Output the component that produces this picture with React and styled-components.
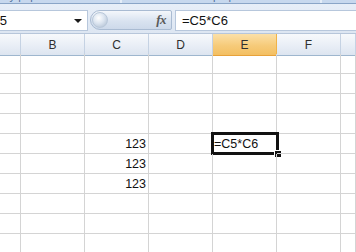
import React from "react";
import styled, { createGlobalStyle } from "styled-components";

const GlobalStyle = createGlobalStyle`
  body {
    margin: 0;
    background: #ffffff;
    font-family: "Liberation Sans", Arial, sans-serif;
    overflow: hidden;
  }
`;

const Window = styled.div`
  width: 356px;
  height: 252px;
  overflow: hidden;
  background: #ffffff;
  display: flex;
  flex-direction: column;
`;

const RibbonStrip = styled.div`
  height: 3px;
  display: flex;
  overflow: hidden;
  background: #c7d8ee;
  border-bottom: 1px solid #8aa5c7;
  flex-shrink: 0;
`;

const RibbonGroup = styled.div`
  width: ${(p) => p.$width}px;
  margin-left: ${(p) => p.$offset || 0}px;
  flex-shrink: 0;
  border-right: 2px solid #e4edf8;
  display: flex;
  justify-content: center;
  overflow: hidden;
`;

const GroupLabel = styled.span`
  font-size: 11px;
  line-height: 12px;
  margin-top: -10px;
  color: #4f6f99;
  white-space: nowrap;
`;

const FormulaBar = styled.div`
  height: 29px;
  display: flex;
  align-items: flex-start;
  padding-top: 6px;
  box-sizing: border-box;
  background: linear-gradient(#e7eef8, #dde6f2);
  flex-shrink: 0;
`;

const NameBox = styled.div`
  margin-left: -40px;
  width: 128px;
  height: 21px;
  box-sizing: border-box;
  background: #ffffff;
  border: 1px solid #b7c7dc;
  border-left: none;
  display: flex;
  align-items: center;
  justify-content: space-between;
  padding: 0 5px 0 31px;
  font-size: 13px;
  color: #111;
`;

const DropArrow = styled.span`
  width: 0;
  height: 0;
  border-left: 4px solid transparent;
  border-right: 4px solid transparent;
  border-top: 4px solid #1a1a1a;
  margin-top: 1px;
`;

const Pill = styled.div`
  margin-left: 2px;
  width: 82px;
  height: 20px;
  box-sizing: border-box;
  border: 1px solid #a9bbd2;
  border-radius: 10px 2px 2px 10px;
  background: linear-gradient(#f4f7fb, #d9e3f0 55%, #cdd9ea);
  display: flex;
  align-items: center;
  justify-content: space-between;
  padding: 0 5px 0 1px;
`;

const Knob = styled.span`
  width: 16px;
  height: 16px;
  border-radius: 50%;
  background: radial-gradient(circle at 40% 35%, #ffffff, #dce5f0 45%, #a9b9cd);
  border: 1px solid #b9c8da;
  box-sizing: border-box;
`;

const FxLabel = styled.span`
  font-family: "Liberation Serif", "Times New Roman", serif;
  font-style: italic;
  font-weight: bold;
  font-size: 13px;
  color: #5a5a5a;
  letter-spacing: -0.5px;
`;

const FormulaInput = styled.div`
  margin-left: 3px;
  flex: 1;
  height: 21px;
  box-sizing: border-box;
  background: #ffffff;
  border: 1px solid #b7c7dc;
  border-right: none;
  display: flex;
  align-items: center;
  padding-left: 6px;
  font-size: 13px;
  color: #111;
`;

const Sheet = styled.div`
  display: grid;
  grid-template-columns: 21px repeat(5, 64px) 1fr;
  grid-auto-rows: 20px;
  flex: 1;
  border-top: 1px solid #b7c6da;
`;

const HeaderCell = styled.div`
  height: 22px;
  box-sizing: border-box;
  border-right: 1px solid ${(p) => (p.$selected ? "#f0b348" : "#c5d2e3")};
  border-bottom: 1px solid ${(p) => (p.$selected ? "#e7a23a" : "#9eb6ce")};
  background: ${(p) =>
    p.$selected
      ? "linear-gradient(#fbe0a8, #f6cb7a 55%, #f3bf62)"
      : "linear-gradient(#f7f9fc, #e9eef6 55%, #dde5f0)"};
  display: flex;
  align-items: center;
  justify-content: center;
  font-size: 12px;
  color: #2f2f2f;
`;

const Cell = styled.div`
  position: relative;
  box-sizing: border-box;
  border-right: 1px solid #d4d4d4;
  border-bottom: 1px solid #d4d4d4;
  display: flex;
  align-items: flex-end;
  justify-content: ${(p) => (p.$align === "right" ? "flex-end" : "flex-start")};
  padding: 0 2px 2px 1px;
  font-size: 12.5px;
  color: #111;
  white-space: nowrap;
`;

const ActiveFrame = styled.span`
  position: absolute;
  left: -2px;
  top: -2px;
  right: -3px;
  bottom: -2px;
  border: 3px solid #111;
  box-sizing: border-box;
  pointer-events: none;
`;

const FillHandle = styled.span`
  position: absolute;
  right: -6px;
  bottom: -6px;
  width: 6px;
  height: 6px;
  background: #111;
  border: 1px solid #ffffff;
`;

const columns = ["A", "B", "C", "D", "E", "F", "G"];

const data = {
  5: { C: "123", E: "=C5*C6" },
  6: { C: "123" },
  7: { C: "123" },
};

const activeCell = { row: 5, col: "E" };

function App() {
  const rows = Array.from({ length: 10 }, (_, i) => i + 1);

  return (
    <Window>
      <GlobalStyle />
      <RibbonStrip>
        <RibbonGroup $width={160} $offset={-40}>
          <GroupLabel>Буфер обмена</GroupLabel>
        </RibbonGroup>
        <RibbonGroup $width={198}>
          <GroupLabel>Шрифт</GroupLabel>
        </RibbonGroup>
        <RibbonGroup $width={80} />
      </RibbonStrip>

      <FormulaBar>
        <NameBox>
          E5
          <DropArrow />
        </NameBox>
        <Pill>
          <Knob />
          <FxLabel>fx</FxLabel>
        </Pill>
        <FormulaInput>=C5*C6</FormulaInput>
      </FormulaBar>

      <Sheet>
        {columns.map((c) => (
          <HeaderCell key={c} $selected={c === activeCell.col}>
            {c === "A" || c === "G" ? "" : c}
          </HeaderCell>
        ))}
        {rows.map((r) =>
          columns.map((c) => {
            const value = data[r] && data[r][c];
            const isActive = r === activeCell.row && c === activeCell.col;
            const numeric = value && !isNaN(Number(value));
            return (
              <Cell key={`${c}${r}`} $align={numeric ? "right" : "left"}>
                {value}
                {isActive && (
                  <ActiveFrame>
                    <FillHandle />
                  </ActiveFrame>
                )}
              </Cell>
            );
          })
        )}
      </Sheet>
    </Window>
  );
}

export default App;
